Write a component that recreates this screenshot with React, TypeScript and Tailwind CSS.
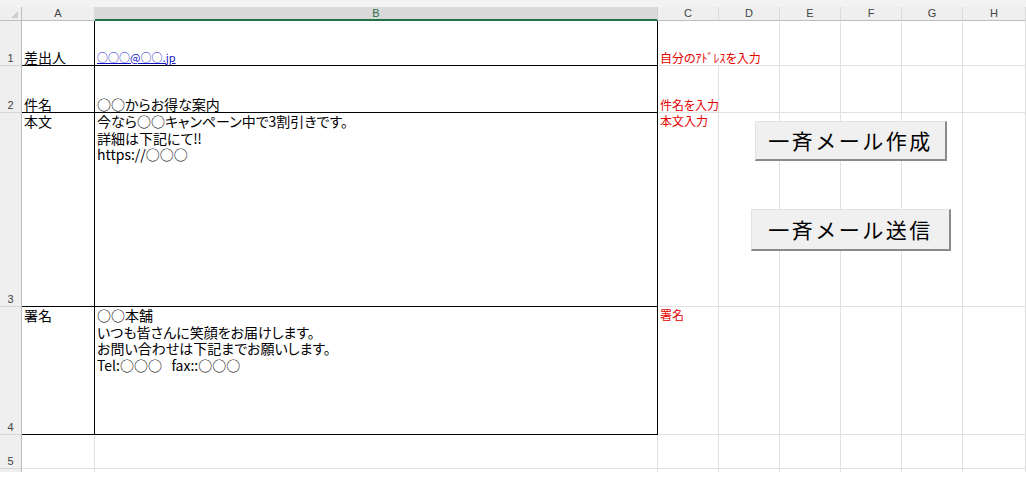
import React from 'react';

const jp = "font-['Noto_Sans_CJK_JP','Noto_Sans_CJK_SC',sans-serif] [font-feature-settings:'palt']";
const ui = "font-['Liberation_Sans','Noto_Sans_CJK_JP',sans-serif]";

const colLetters = ['A', 'B', 'C', 'D', 'E', 'F', 'G', 'H'];

// grid row heights (after header): rows 1..5 plus a sliver of row 6
const rowHeights = ['h-[45px]', 'h-[47px]', 'h-[194px]', 'h-[128px]', 'h-[34px]', 'h-[3px]'];

type RowDef = {
  num: string;
  a?: React.ReactNode;
  b?: React.ReactNode;
  c?: React.ReactNode;
  top?: boolean;
  boxed?: boolean;
  overflowC?: boolean;
};

const rows: RowDef[] = [
  {
    num: '1',
    a: '差出人',
    b: (
      <span className="text-[11px] text-[#1414c8] underline underline-offset-[1px]">○○○@○○.jp</span>
    ),
    c: '自分のｱﾄﾞﾚｽを入力',
    boxed: true,
    overflowC: true,
  },
  { num: '2', a: '件名', b: '○○からお得な案内', c: '件名を入力', boxed: true },
  {
    num: '3',
    a: '本文',
    b: (
      <>
        今なら○○キャンペーン中で3割引きです。
        <br />
        詳細は下記にて‼
        <br />
        https://○○○
      </>
    ),
    c: '本文入力',
    top: true,
    boxed: true,
  },
  {
    num: '4',
    a: '署名',
    b: (
      <>
        ○○本舗
        <br />
        いつも皆さんに笑顔をお届けします。
        <br />
        お問い合わせは下記までお願いします。
        <br />
        Tel:○○○&nbsp;&nbsp;&nbsp;fax::○○○
      </>
    ),
    c: '署名',
    top: true,
    boxed: true,
  },
  { num: '5' },
  { num: '' },
];

function SheetButton({ label, className }: { label: string; className: string }) {
  return (
    <button
      className={`absolute flex items-center justify-center bg-[#f0f0f0] border-t border-l border-[#e2e2e2] border-r-2 border-b-2 border-r-[#8a8a8a] border-b-[#8a8a8a] text-[21px] tracking-[2.5px] text-black font-['Noto_Sans_CJK_JP',sans-serif] ${className}`}
    >
      {label}
    </button>
  );
}

export default function App() {
  return (
    <div className="w-[1026px] h-[484px] bg-white overflow-hidden">
      <div className="relative">
        {/* strip above headers */}
        <div className="h-[7px] bg-[#f3f3f3]" />

        <div className="grid grid-cols-[22px_73px_563px_61px_61px_61px_61px_61px_63px]">
          {/* column headers */}
          <div className="h-[14px] bg-[#efefef] border-r border-b border-[#bdbdbd] relative">
            <svg className="absolute left-[11px] top-[4px]" width="8" height="8" viewBox="0 0 8 8">
              <polygon points="7,0 7,7 0,7" fill="#cdcdcd" />
            </svg>
          </div>
          {colLetters.map((l) =>
            l === 'B' ? (
              <div
                key={l}
                className={`h-[14px] bg-[#dadada] border-r border-[#d0d0d0] border-b-2 border-b-[#217346] flex items-center justify-center text-[11px] leading-none text-[#2d6b48] ${ui}`}
              >
                {l}
              </div>
            ) : (
              <div
                key={l}
                className={`h-[14px] bg-[#efefef] border-r border-b border-r-[#dadada] border-b-[#bdbdbd] flex items-center justify-center text-[11px] leading-none text-[#444] ${ui}`}
              >
                {l}
              </div>
            )
          )}

          {/* body rows */}
          {rows.map((r, i) => {
            const h = rowHeights[i];
            const last = i === rows.length - 1;
            const grid = last ? 'border-r border-[#e0e0e0]' : 'border-r border-b border-[#e0e0e0]';
            const align = r.top ? 'items-start' : 'items-end';
            const edgeA = r.boxed ? 'border-r border-b border-black' : grid;
            const edgeB = r.boxed ? 'border-r border-b border-black' : grid;
            const edgeC = r.overflowC ? 'border-b border-[#e0e0e0]' : grid;
            return (
              <React.Fragment key={i}>
                <div
                  className={`${h} bg-[#efefef] ${last ? 'border-r' : 'border-r border-b'} border-r-[#bdbdbd] border-b-[#d6d6d6] flex items-end justify-center text-[11px] leading-[13px] text-[#444] ${ui}`}
                >
                  {r.num}
                </div>
                <div className={`${h} ${edgeA} flex ${align} pl-[2px] text-[14px] leading-[16.5px] text-black ${jp}`}>
                  {r.a}
                </div>
                <div className={`${h} ${edgeB} flex ${align} pl-[2px] text-[14px] leading-[16.5px] text-black ${jp}`}>
                  <div>{r.b}</div>
                </div>
                <div
                  className={`${h} ${edgeC} flex ${align} pl-[2px] whitespace-nowrap overflow-visible text-[12px] leading-[15px] text-[#e60000] ${jp}`}
                >
                  {r.c}
                </div>
                {[0, 1, 2, 3, 4].map((k) => (
                  <div key={k} className={`${h} ${grid}`} />
                ))}
              </React.Fragment>
            );
          })}
        </div>

        <SheetButton label="一斉メール作成" className="left-[755px] top-[121px] w-[192px] h-[40px]" />
        <SheetButton label="一斉メール送信" className="left-[751px] top-[209px] w-[200px] h-[42px]" />
      </div>
    </div>
  );
}
